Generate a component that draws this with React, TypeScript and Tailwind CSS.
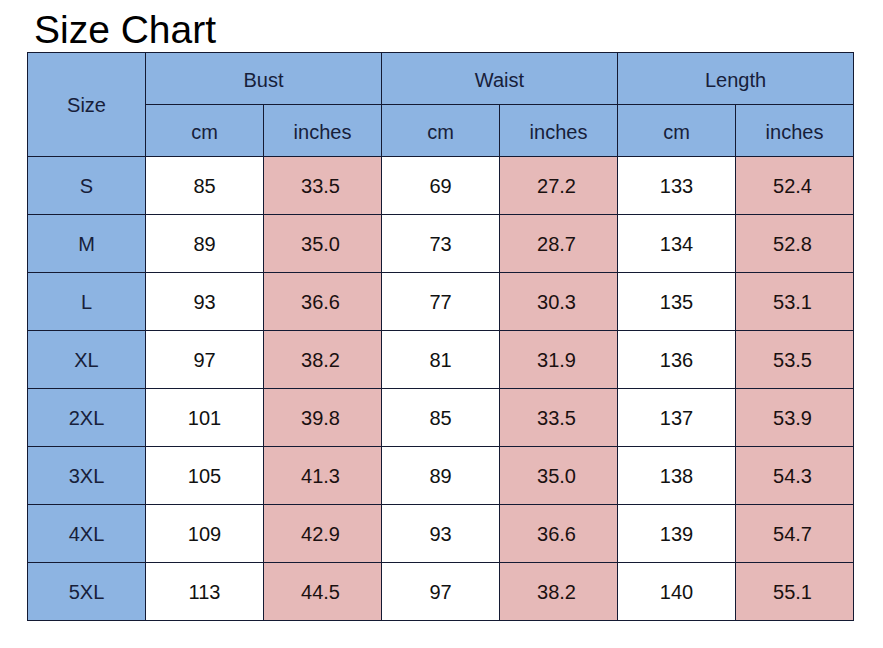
import React from 'react';

const ROWS = [
  ['S', '85', '33.5', '69', '27.2', '133', '52.4'],
  ['M', '89', '35.0', '73', '28.7', '134', '52.8'],
  ['L', '93', '36.6', '77', '30.3', '135', '53.1'],
  ['XL', '97', '38.2', '81', '31.9', '136', '53.5'],
  ['2XL', '101', '39.8', '85', '33.5', '137', '53.9'],
  ['3XL', '105', '41.3', '89', '35.0', '138', '54.3'],
  ['4XL', '109', '42.9', '93', '36.6', '139', '54.7'],
  ['5XL', '113', '44.5', '97', '38.2', '140', '55.1'],
];

export default function App() {
  return (
    <div className="w-[883px] h-[648px] bg-white font-['Liberation_Sans',Arial,sans-serif] overflow-hidden">
      {/* Title */}
      <div className="h-[52px] pl-[34px] pt-[10px]">
        <h1 className="text-[39px] leading-[39px] text-black">Size Chart</h1>
      </div>

      {/* Chart grid */}
      <div className="ml-[27px] w-[827px] border border-[#141a33] bg-[#141a33] grid grid-cols-[repeat(7,117px)] grid-rows-[51px_51px_repeat(8,57px)] gap-px text-[20px] text-center">
        <div className="row-span-2 bg-[#8db4e2] text-[#17203a] flex items-center justify-center">Size</div>
        <div className="col-span-2 bg-[#8db4e2] text-[#17203a] flex items-center justify-center pt-[2px]">Bust</div>
        <div className="col-span-2 bg-[#8db4e2] text-[#17203a] flex items-center justify-center pt-[2px]">Waist</div>
        <div className="col-span-2 bg-[#8db4e2] text-[#17203a] flex items-center justify-center pt-[2px]">Length</div>
        {['cm', 'inches', 'cm', 'inches', 'cm', 'inches'].map((u, i) => (
          <div key={i} className="bg-[#8db4e2] text-[#17203a] flex items-center justify-center pt-[2px]">{u}</div>
        ))}

        {ROWS.map((row) =>
          row.map((cell, j) => (
            <div
              key={row[0] + j}
              className={
                j === 0
                  ? 'bg-[#8db4e2] text-[#17203a] flex items-center justify-center'
                  : j % 2 === 0
                  ? 'bg-[#e6b9b8] text-[#1a1010] flex items-center justify-center pr-[4px]'
                  : 'bg-white text-[#111] flex items-center justify-center'
              }
            >
              {cell}
            </div>
          ))
        )}
      </div>
    </div>
  );
}
